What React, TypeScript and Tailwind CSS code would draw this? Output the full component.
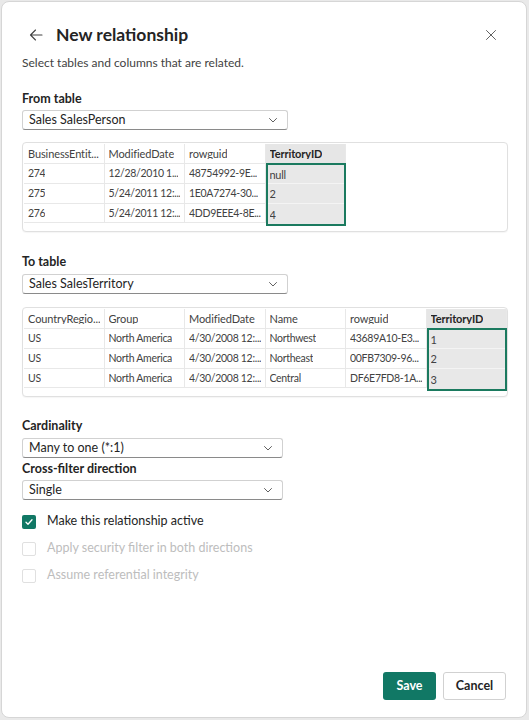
import React from "react";

const font = { fontFamily: 'Lato, "Noto Sans", sans-serif' };

function Chevron() {
  return (
    <svg width="12" height="12" viewBox="0 0 12 12" fill="none">
      <path d="M2.5 4.5 6 8l3.5-3.5" stroke="#616161" strokeWidth="1" strokeLinecap="round" strokeLinejoin="round" />
    </svg>
  );
}

function Select({ value, width }: { value: string; width: string }) {
  return (
    <div
      className={`flex h-[20px] items-center justify-between rounded-[3px] border border-[#d1d1d1] border-b-[#8a8a8a] bg-white pl-[6px] pr-[8px] text-[12.5px] leading-none text-[#242424] ${width}`}
    >
      <span>{value}</span>
      <Chevron />
    </div>
  );
}

type Col = { name: string; cells: string[]; key?: boolean };

function DataTable({ cols }: { cols: Col[] }) {
  return (
    <div className="flex h-[90px] w-[486px] rounded-[4px] border border-[#e0e0e0] bg-white pl-[1px] pt-[1px] shadow-[0_1px_1px_rgba(0,0,0,0.04)]">
      {cols.map((c) => (
        <div key={c.name} className="flex w-[80.5px] flex-col">
          <div
            className={`flex h-[19px] items-center border-r border-[#e8e8e8] px-[4px] text-[11px] leading-none tracking-[-0.1px] ${
              c.key ? "bg-[#e6e6e6] font-bold text-[#242424]" : "text-[#424242]"
            }`}
          >
            <span className="overflow-hidden whitespace-nowrap">{c.name}</span>
          </div>
          <div className={`flex flex-col ${c.key ? "border-2 border-[#1b7a5f] bg-[#e8e8e8]" : ""}`}>
            {c.cells.map((v, i) => (
              <div
                key={i}
                className={`flex items-center text-[10.5px] leading-none tracking-[-0.3px] text-[#424242] ${
                  c.key
                    ? `px-[2px] text-[11px] ${i < c.cells.length - 1 ? "border-b border-[#f4f4f4]" : ""} ${i === 0 ? "h-[19px]" : "h-[20px]"}`
                    : "h-[20px] border-r border-t border-[#e8e8e8] px-[4px]"
                } ${!c.key && i === c.cells.length - 1 ? "border-b" : ""}`}
              >
                <span className="overflow-hidden whitespace-nowrap">{v}</span>
              </div>
            ))}
          </div>
        </div>
      ))}
    </div>
  );
}

function Check({ checked, disabled, label }: { checked?: boolean; disabled?: boolean; label: string }) {
  return (
    <div className="flex h-[27px] items-center gap-[11px]">
      <div
        className={`flex h-[14px] w-[14px] items-center justify-center rounded-[2px] ${
          checked ? "bg-[#117865]" : disabled ? "border border-[#e0e0e0] bg-white" : "border border-[#616161]"
        }`}
      >
        {checked && (
          <svg width="10" height="10" viewBox="0 0 10 10" fill="none">
            <path d="M2 5.2 4 7.2 8 2.8" stroke="white" strokeWidth="1.3" strokeLinecap="round" strokeLinejoin="round" />
          </svg>
        )}
      </div>
      <span className={`text-[12.5px] leading-none ${disabled ? "text-[#bdbdbd]" : "text-[#242424]"}`}>{label}</span>
    </div>
  );
}

export default function App() {
  const fromCols: Col[] = [
    { name: "BusinessEntit...", cells: ["274", "275", "276"] },
    { name: "ModifiedDate", cells: ["12/28/2010 1...", "5/24/2011 12:...", "5/24/2011 12:..."] },
    { name: "rowguid", cells: ["48754992-9E...", "1E0A7274-30...", "4DD9EEE4-8E..."] },
    { name: "TerritoryID", cells: ["null", "2", "4"], key: true },
  ];
  const toCols: Col[] = [
    { name: "CountryRegio...", cells: ["US", "US", "US"] },
    { name: "Group", cells: ["North America", "North America", "North America"] },
    { name: "ModifiedDate", cells: ["4/30/2008 12:...", "4/30/2008 12:...", "4/30/2008 12:..."] },
    { name: "Name", cells: ["Northwest", "Northeast", "Central"] },
    { name: "rowguid", cells: ["43689A10-E3...", "00FB7309-96...", "DF6E7FD8-1A..."] },
    { name: "TerritoryID", cells: ["1", "2", "3"], key: true },
  ];

  return (
    <div className="h-[720px] w-[529px] bg-[#e9e9e9] p-[1px]" style={font}>
      <div className="flex h-[717px] w-[526px] flex-col rounded-[8px] border border-[#d6d6d6] bg-white pl-[20px] pr-[20px]">
        {/* Header */}
        <div className="mt-[21px] flex h-[24px] items-center">
          <svg width="16" height="16" viewBox="0 0 16 16" fill="none" className="ml-[6px]">
            <path d="M14 8H2.5M7.5 3 2.5 8l5 5" stroke="#424242" strokeWidth="1.1" strokeLinecap="round" strokeLinejoin="round" />
          </svg>
          <span className="ml-[12px] text-[17.5px] font-bold leading-none text-[#242424]">New relationship</span>
          <svg width="12" height="12" viewBox="0 0 12 12" fill="none" className="ml-auto mr-[9px]">
            <path d="M1.5 1.5 10.5 10.5M10.5 1.5 1.5 10.5" stroke="#616161" strokeWidth="1" strokeLinecap="round" />
          </svg>
        </div>
        <div className="mt-[8px] text-[12px] leading-[15px] text-[#424242]">Select tables and columns that are related.</div>

        <div className="mt-[21px] text-[12.5px] font-bold leading-[15px] text-[#242424]">From table</div>
        <div className="mt-[4px]">
          <Select value="Sales SalesPerson" width="w-[266px]" />
        </div>
        <div className="mt-[12px]">
          <DataTable cols={fromCols} />
        </div>

        <div className="mt-[22px] text-[12.5px] font-bold leading-[15px] text-[#242424]">To table</div>
        <div className="mt-[5px]">
          <Select value="Sales SalesTerritory" width="w-[266px]" />
        </div>
        <div className="mt-[13px]">
          <DataTable cols={toCols} />
        </div>

        <div className="mt-[21px] text-[12.5px] font-bold leading-[15px] text-[#242424]">Cardinality</div>
        <div className="mt-[5px]">
          <Select value="Many to one (*:1)" width="w-[261px]" />
        </div>
        <div className="mt-[3px] text-[12.5px] font-bold leading-[15px] text-[#242424]">Cross-filter direction</div>
        <div className="mt-[4px]">
          <Select value="Single" width="w-[261px]" />
        </div>

        <div className="mt-[8px] flex flex-col">
          <Check checked label="Make this relationship active" />
          <Check disabled label="Apply security filter in both directions" />
          <Check disabled label="Assume referential integrity" />
        </div>

        <div className="mt-auto mb-[17px] flex justify-end gap-[7px]">
          <button className="h-[28px] w-[53px] rounded-[3px] bg-[#117865] text-[12.5px] font-bold text-white">Save</button>
          <button className="h-[28px] w-[63px] rounded-[3px] border border-[#d1d1d1] bg-white text-[12.5px] font-bold text-[#242424]">Cancel</button>
        </div>
      </div>
    </div>
  );
}
